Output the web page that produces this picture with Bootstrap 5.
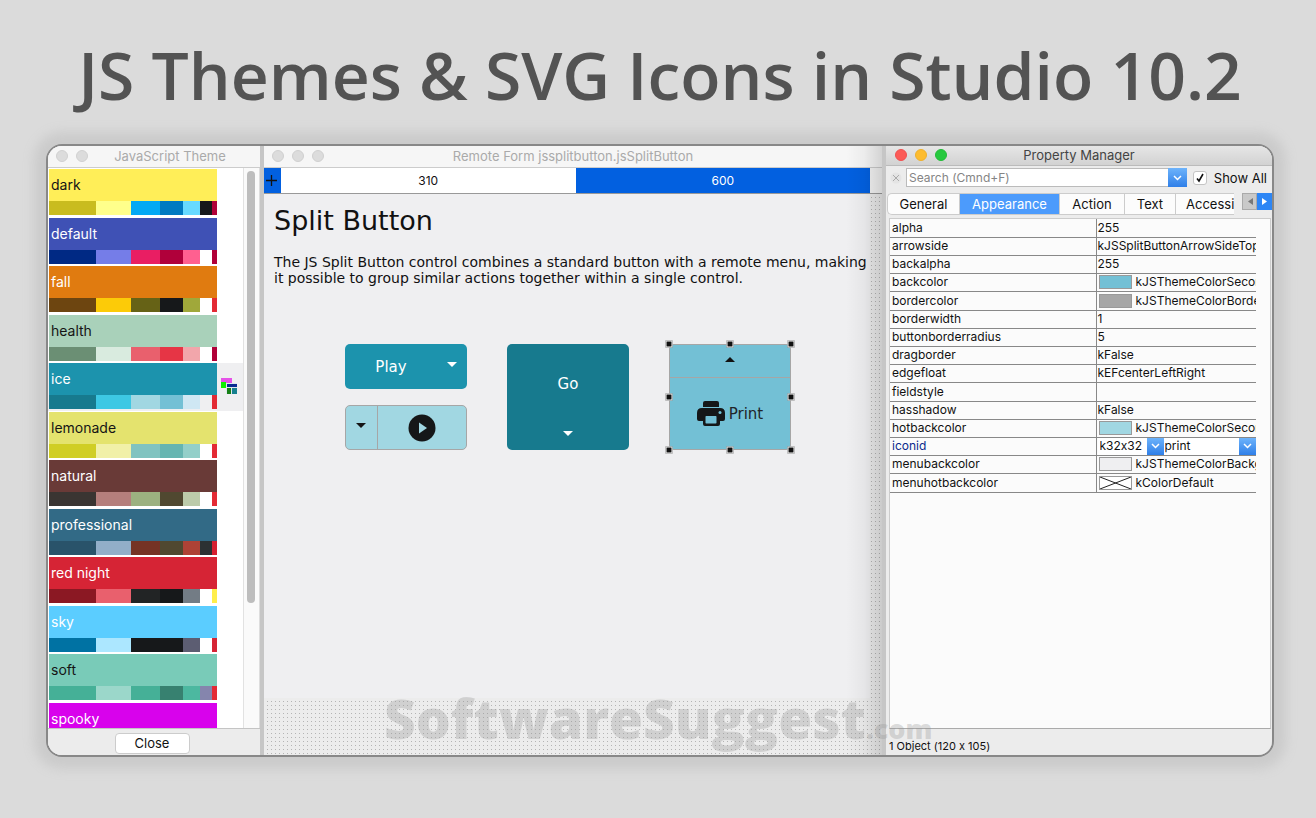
<!DOCTYPE html>
<html lang="en">
<head>
<meta charset="utf-8">
<meta name="viewport" content="width=device-width, initial-scale=1">
<title>JS Themes &amp; SVG Icons in Studio 10.2</title>
<link href="https://cdn.jsdelivr.net/npm/bootstrap@5.3.0/dist/css/bootstrap.min.css" rel="stylesheet">
<style>
body{background:#dbdbdb;font-family:Inter,"Liberation Sans",sans-serif;font-size:13px;line-height:16px;color:#111;font-variant-ligatures:no-contextual}
button,input,select{font-family:inherit;font-size:inherit;color:inherit;font-variant-ligatures:inherit}
.page{padding:0 42px 61px 46px}
.headline{font:600 66px/96px "Open Sans",sans-serif;color:#535353;margin:0;padding-top:26px;height:144px;white-space:nowrap}
.studio{border:2px solid #888;border-radius:16px;background:#cbcbcb;box-shadow:0 0 12px 12px #cbcbcb;min-height:612px}
.studio-clip{border-radius:14px;overflow:hidden;gap:4px;background:#c6c6c6}
.pane{background:#efeff1;min-width:0}
.pane-themes{width:212px}
.pane-props{width:386px;background:#ececec}
.titlebar{height:22px;background:#f6f6f6;border-bottom:1px solid #ccc;color:#aaa;flex:none;padding-top:2px}
.titlebar .dots{left:8px;top:4px;gap:8px}
.dot{width:12px;height:12px;border-radius:50%;background:#dcdcdc;border:1px solid #d0d0d0}
.pane-props .titlebar{height:20px;color:#444;background:linear-gradient(#e6e6e6,#d2d2d2);border-color:#bbb;padding-top:1px}
.pane-props .dots{left:9px;top:3px}
.red{background:#fc5b57;border-color:#f05050}.amber{background:#fdbc2f;border-color:#eeb02c}.green{background:#27c93f;border-color:#23bb38}
/* theme list */
.list-wrap{flex:1 1 0;min-height:0;background:#fff}
.theme-list{overflow:hidden;padding-top:1px}
.theme{height:48px;padding:0 0 2px 1px}
.theme:nth-child(even){height:49px}
.theme.active{background:#efeff1}
.theme-body{width:168px}
.theme-name{height:32px;padding:0 0 0 2px;border:0;text-align:left;display:block;width:168px;font-size:14px;line-height:32px}
.swatches{display:grid;grid-template-columns:47px 35px 29px 23px 17px 12px 5px;height:14px}
.scroller{width:17px;background:#fafafa;border-left:1px solid #e2e2e2;border-right:1px solid #ddd;padding:3px 3px}
.thumb{height:78%;width:8px;border-radius:4px;background:#bdbdbd}
.close-bar{height:27px;background:#ececec;border-top:1px solid #c4c4c4;padding-top:4px;padding-right:4px;flex:none}
.close-btn{width:75px;height:21px;border:1px solid #ccc;border-radius:4px;background:#fff;padding:0;line-height:19px}
/* form designer */
.ruler{height:26px;border-bottom:1px solid #999;background:#f4f4f4;padding-right:12px;font-size:12px;flex:none}
.ruler .plus{width:17px;background:#0260e0}
.ruler .seg{flex:1 1 0;background:#fff;display:flex;align-items:center;justify-content:center}
.ruler .seg-on{background:#0260e0;color:#fff}
.canvas{flex:1;padding:0 12px 57px 0;background:linear-gradient(#ececec 3px,transparent 3px) 0 0/4px 4px,linear-gradient(90deg,#ececec 3px,#b4b4b4 3px) 0 0/4px 4px}
.form-face{height:100%;background:#efeff1;font-family:"DejaVu Sans",sans-serif;padding:11px 0 0 10px}
.form-face h2{font-size:27px;line-height:32px;margin:0 0 17px}
.form-face p{font-size:14px;line-height:16px;margin:0 0 58px}
.samples{grid-template-columns:122px 122px 122px;gap:40px;padding-left:71px;height:106px;display:grid}
.sb{border-radius:5px;border:0;padding:0;display:flex;align-items:center;justify-content:center;font-size:15px;color:#fff}
.sb-line{border:1px solid #a6a6a6;color:#111;overflow:hidden}
.sb button{background:none;border:0;padding:0;display:flex;align-items:center;justify-content:center}
.sb .rule-right{border-right:1px solid #a6a6a6;width:32px}
.sb .rule-below{border-bottom:1px solid #a6a6a6;height:33px;padding-bottom:4px}
.sb .menu-right{width:30px}
.play{background:#1c93ad;height:45px}.ice-lt{background:#a1d7e2;height:45px}.go{background:#177a8e;flex-direction:column}
.go .go-main{padding-bottom:8px}
.print{background:#73c0d5;flex-direction:column;height:106px}
.h{position:absolute;width:7px;height:7px;background:#111;border:1px solid #fff}
.edge-shade{position:absolute;right:0;top:0;bottom:0;width:36px;background:linear-gradient(90deg,transparent,rgba(0,0,0,.04) 50%,rgba(0,0,0,.14));pointer-events:none}
/* property manager */
.search-row{height:23px;padding:0 5px 0 4px;flex:none}
.search-row input[type=text]{border:1px solid #bbb;border-right:0;height:19px;padding:0 2px;background:#fff;flex:1;min-width:0;font-size:12px;border-radius:0}
.search-row input::placeholder{color:#858585;opacity:1}
.drop{width:19px;height:19px;background:linear-gradient(#6db3fb,#2f7fe8);border:0;padding:0;flex:none;display:flex;align-items:center;justify-content:center}
.tick{appearance:none;width:14px;height:14px;border:1px solid #c4c4c4;border-radius:3px;margin:0 7px 0 6px;background:#fff url("data:image/svg+xml,%3Csvg xmlns='http://www.w3.org/2000/svg' viewBox='0 0 12 12'%3E%3Cpath d='M3 6.5l2 2.5 4-7' fill='none' stroke='%23111' stroke-width='1.6'/%3E%3C/svg%3E")}
.tab-row{height:29px;padding:4px 0 0 1px;flex:none}
.tabs{width:347px;overflow:hidden;height:22px;border-radius:5px 0 0 5px;border:1px solid #ccc;border-right:0;background:#fcfcfc}
.tabs button{border:0;border-right:1px solid #ccc;background:none;padding:0;height:20px;flex:none;line-height:20px}
.tabs .on{background:#4c9bfc;color:#fff}
.arrows{margin-left:8px;width:30px;height:17px;overflow:hidden}
.arrows button{width:15px;border:1px solid #aaa;background:#c9c9c9;padding:0;display:flex;align-items:center;justify-content:center}
.arrows .next{background:#2d86f5;border-color:#2d86f5}
.grid-box{margin:0 1px 0 3px;background:#fbfbfb;border:1px solid #ccc;border-bottom-color:#aaa;flex:1}
.props{width:366px;table-layout:fixed;border-collapse:collapse;font-size:12px;line-height:14px}
.props td,.props th{height:18px;padding:0 0 0 2px;border-bottom:1px solid #888;white-space:nowrap;overflow:hidden;font-weight:400}
.props tr:nth-child(5n) td,.props tr:nth-child(5n) th{height:19px}
.props th{width:206px;border-right:1px solid #888}
.props td{padding-left:1px}
.line-in{display:flex;align-items:center;height:14px}
.chip{width:33px;height:14px;border:1px solid #999;margin:0 4px 0 1px;flex:none}
.cell-drop{width:17px;height:17px}
.pick{background:#fff;height:17px}
.pick select{appearance:none;border:0;background:none;padding:0 0 0 1px;flex:1;min-width:0;height:17px;font-size:12px}
.pick select.icon-size{flex:none;width:49px;padding-left:2px}
.status{height:26px;padding:10px 0 0 3px;font-size:11px;line-height:14px;flex:none}
.wmark{position:absolute;left:336px;bottom:-14px;font:800 55px/80px "Open Sans",sans-serif;color:rgba(150,150,150,.32);pointer-events:none;white-space:nowrap}
.wmark span{font-size:27px}
</style>
</head>
<body>
<main class="page d-flex flex-column min-vh-100">
<h1 class="headline text-center">JS Themes &amp; SVG Icons in Studio 10.2</h1>
<div class="studio d-flex flex-grow-1 position-relative">
<div class="studio-clip d-flex flex-grow-1">
  <section class="pane pane-themes d-flex flex-column flex-shrink-0">
    <div class="titlebar position-relative text-center ps-4"><div class="dots position-absolute d-flex"><i class="dot"></i><i class="dot"></i></div><div class="ps-2">JavaScript Theme</div></div>
    <div class="list-wrap d-flex">
      <div class="theme-list flex-grow-1" id="themes"></div>
      <div class="scroller"><div class="thumb"></div></div>
    </div>
    <div class="close-bar text-center"><button class="close-btn">Close</button></div>
  </section>

  <section class="pane d-flex flex-column flex-grow-1 position-relative">
    <div class="titlebar position-relative text-center"><div class="dots position-absolute d-flex"><i class="dot"></i><i class="dot"></i><i class="dot"></i></div><div>Remote Form jssplitbutton.jsSplitButton</div></div>
    <div class="ruler d-flex">
      <div class="plus d-flex align-items-center"><svg width="16" height="16" viewBox="0 0 16 16"><path d="M2 7.500h11M7.500 2v11" stroke="#111" stroke-width="1.300"/></svg></div>
      <div class="seg">310</div><div class="seg seg-on">600</div>
    </div>
    <div class="canvas"><div class="form-face">
      <h2>Split Button</h2>
      <p>The JS Split Button control combines a standard button with a remote menu, making it possible to group similar actions together within a single control.</p>
      <div class="samples">
        <div class="d-flex flex-column justify-content-between">
          <div class="sb play"><button class="flex-grow-1 text-white">Play</button><button aria-label="Play menu" class="align-self-stretch menu-right pb-1"><svg width="14" height="6"><path d="M2 0h10L7 5z" fill="#fff"/></svg></button></div>
          <div class="sb sb-line ice-lt"><button aria-label="Menu" class="h-100 rule-right pb-1"><svg width="15" height="6"><path d="M2 0h10L7 5z" fill="#151515"/></svg></button><button aria-label="Run" class="flex-grow-1"><svg width="28" height="28" viewBox="0 0 28 28"><circle cx="14" cy="14" r="13.500" fill="#151718"/><path d="M11 8.500v11l8-5.500z" fill="#a1d7e2"/></svg></button></div>
        </div>
        <div class="sb go"><button class="flex-grow-1 text-white go-main">Go</button><button aria-label="Go menu" class="pb-2"><svg width="12" height="11" class="d-block"><path d="M1 0h10L6 5z" fill="#fff"/></svg></button></div>
        <div class="position-relative">
          <div class="sb sb-line print align-items-stretch"><button aria-label="Print menu" class="rule-below"><svg width="12" height="7"><path d="M1 6h10L6 1z" fill="#111"/></svg></button><button class="flex-grow-1 gap-1 text-dark"><svg width="28" height="26" viewBox="0 0 28 26"><path d="M8 0h12q2 0 2 2v4H6V2q0-2 2-2z" fill="#151718"/><path d="M5 7h18q5 0 5 5v6q0 2-2 2h-3v3q0 2-2 2H8q-2 0-2-2v-3H2q-2 0-2-2v-6q0-5 5-5z" fill="#151718"/><rect x="8.500" y="15" width="11" height="7.500" rx=".8" fill="#73c0d5"/><circle cx="23" cy="11.500" r="1.500" fill="#73c0d5"/></svg><span>Print</span></button></div>
          <i class="h top-0 start-0 translate-middle"></i><i class="h top-0 start-50 translate-middle"></i><i class="h top-0 start-100 translate-middle"></i><i class="h top-50 start-0 translate-middle"></i><i class="h top-50 start-100 translate-middle"></i><i class="h top-100 start-0 translate-middle"></i><i class="h top-100 start-50 translate-middle"></i><i class="h top-100 start-100 translate-middle"></i>
        </div>
      </div>
    </div></div>
    <div class="edge-shade"></div>
  </section>

  <section class="pane pane-props d-flex flex-column flex-shrink-0">
    <div class="titlebar position-relative text-center"><div class="dots position-absolute d-flex"><i class="dot red"></i><i class="dot amber"></i><i class="dot green"></i></div><div>Property Manager</div></div>
    <div class="search-row d-flex align-items-center">
      <svg width="16" height="16" viewBox="0 0 16 16"><circle cx="6" cy="8" r="5.500" fill="#e4e4e4"/><path d="M3 5l6 6M9 5l-6 6" stroke="#aaa"/></svg>
      <input type="text" aria-label="Search" placeholder="Search (Cmnd+F)"><button class="drop" aria-label="Search options"><svg width="9" height="6"><path d="M1 1l3.500 3.500L8 1" fill="none" stroke="#fff" stroke-width="1.500"/></svg></button>
      <input class="tick" type="checkbox" id="all" checked><label for="all">Show All</label>
    </div>
    <div class="tab-row d-flex">
      <div class="tabs d-flex"><button style="width:72px">General</button><button class="on" style="width:100px">Appearance</button><button style="width:65px">Action</button><button style="width:51px">Text</button><button class="border-0" style="padding-left:10px">Accessibility</button></div>
      <div class="arrows d-flex"><button aria-label="Previous tab"><svg width="6" height="8"><path d="M6 0v7L1 3.500z" fill="#777"/></svg></button><button class="next" aria-label="Next tab"><svg width="6" height="8"><path d="M0 0v7l5-3.500z" fill="#fff"/></svg></button></div>
    </div>
    <div class="grid-box"><table class="props"><tbody>
      <tr><th>alpha</th><td>255</td></tr>
      <tr><th>arrowside</th><td>kJSSplitButtonArrowSideTop</td></tr>
      <tr><th>backalpha</th><td>255</td></tr>
      <tr><th>backcolor</th><td><div class="line-in"><i class="chip" style="background:#73c0d5"></i>kJSThemeColorSecondary</div></td></tr>
      <tr><th>bordercolor</th><td><div class="line-in"><i class="chip" style="background:#a6a6a6"></i>kJSThemeColorBorder</div></td></tr>
      <tr><th>borderwidth</th><td>1</td></tr>
      <tr><th>buttonborderradius</th><td>5</td></tr>
      <tr><th>dragborder</th><td>kFalse</td></tr>
      <tr><th>edgefloat</th><td>kEFcenterLeftRight</td></tr>
      <tr><th>fieldstyle</th><td></td></tr>
      <tr><th>hasshadow</th><td>kFalse</td></tr>
      <tr><th>hotbackcolor</th><td><div class="line-in"><i class="chip" style="background:#a1d7e2"></i>kJSThemeColorSecondary</div></td></tr>
      <tr><th style="color:#0a2a8c">iconid</th><td><div class="d-flex pick"><select aria-label="Icon size" class="icon-size"><option>k32x32</option></select><span class="drop cell-drop"><svg width="9" height="6"><path d="M1 1l3.500 3.500L8 1" fill="none" stroke="#fff" stroke-width="1.500"/></svg></span><select aria-label="Icon name"><option>print</option></select><span class="drop cell-drop"><svg width="9" height="6"><path d="M1 1l3.500 3.500L8 1" fill="none" stroke="#fff" stroke-width="1.500"/></svg></span></div></td></tr>
      <tr><th>menubackcolor</th><td><div class="line-in"><i class="chip" style="background:#efeff1"></i>kJSThemeColorBackground</div></td></tr>
      <tr><th>menuhotbackcolor</th><td><div class="line-in"><i class="chip d-flex bg-white"><svg width="31" height="12"><path d="M0 0l31 12M31 0L0 12" stroke="#222"/></svg></i>kColorDefault</div></td></tr>
    </tbody></table></div>
    <div class="status">1 Object (120 x 105)</div>
  </section>
</div>
<div class="wmark">SoftwareSuggest<span>.com</span></div>
</div>
</main>
<script>
const themes = [
  ["dark","#151515","#ffee58","#c9bc1f #ffff8b #03a9f4 #007ac1 #67daff #16181a #b00038"],
  ["default","#fff","#3f51b5","#002984 #757de8 #e91e63 #b0003a #ff6090 #fff #b00038"],
  ["fall","#fff","#e07b10","#6d4510 #fccb08 #666216 #16181a #a0a83a #fff #e32a34"],
  ["health","#151515","#a9d1ba","#6b8f74 #d9ebdf #e9606d #e63545 #f2a6ab #fff #b00038"],
  ["ice","#fff","#1c93ad","#177a8e #3dc8e4 #a1d7e2 #73c0d5 #cfe7f3 #efeff1 #e32a34"],
  ["lemonade","#151515","#e4e36e","#d0ce25 #f1f0a8 #80c3c0 #66b5b1 #93cfc9 #fff #e32a34"],
  ["natural","#fff","#693a37","#3a3532 #b57f7c #9cb180 #504830 #bccbaa #fff #e32a34"],
  ["professional","#fff","#326a86","#29536a #92aec8 #753325 #504830 #ae4236 #2c3133 #d61f30"],
  ["red night","#fff","#d62435","#8b1823 #e9606d #222425 #16181a #737c85 #fff #ffee4a"],
  ["sky","#fff","#5bcdff","#0072a3 #ace7ff #16181a #16181a #5c5d72 #fff #d62435"],
  ["soft","#151515","#79cbb8","#45b097 #9bd7ca #45b097 #378170 #4cb8a0 #8585ad #e32a34"],
  ["spooky","#fff","#d802ec","#a000b4 #f050ff #ff9800 #c66900 #ffc947 #fff #e32a34"]
];
const current = '<svg class="ms-1" width="16" height="16" viewBox="0 0 16 16"><path d="M0 0h11v5H0z" fill="#e552e8"/><path d="M0 4h5v6H0z" fill="#0ff000"/><path d="M5 5h11v11H5z" fill="#dfe6ee"/><path d="M6 6h10v3H6z" fill="#082b91"/><path d="M6 10h4v6H6z" fill="#168016"/><path d="M11 10h5v6h-5z" fill="#16808f"/></svg>';
document.getElementById("themes").innerHTML = themes.map(([name, ink, main, sw]) =>
  `<div class="theme d-flex align-items-center ${name === "ice" ? "active" : ""}"><div class="theme-body"><button class="theme-name" style="background:${main};color:${ink}">${name}</button><div class="swatches">${sw.split(" ").map(c => `<i style="background:${c}"></i>`).join("")}</div></div>${name === "ice" ? current : ""}</div>`).join("");
</script>
<script src="https://cdn.jsdelivr.net/npm/bootstrap@5.3.0/dist/js/bootstrap.bundle.min.js"></script>
</body>
</html>
